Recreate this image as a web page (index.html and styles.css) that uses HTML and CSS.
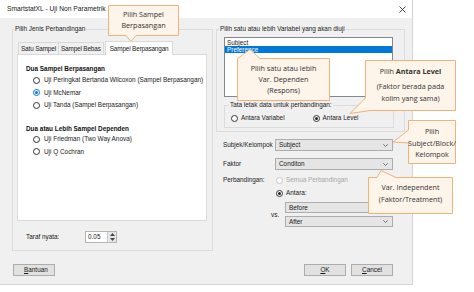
FILE: index.html
```html
<!DOCTYPE html>
<html>
<head>
  <title>SmartstatXL - Uji Non Parametrik</title>
<link rel="stylesheet" href="styles.css">
</head>
<body>
  <div class="dialog">
    <div class="titlebar">
      <span class="title">SmartstatXL - Uji Non Parametrik</span>
      <svg class="close" width="7" height="7" viewBox="0 0 7 7"><path d="M0.5 0.5 L6.5 6.5 M6.5 0.5 L0.5 6.5" stroke="#333" stroke-width="0.9"/></svg>
    </div>

    <div class="main">
      <fieldset class="grp grp-left">
        <legend>Pilih Jenis Perbandingan</legend>
        <div class="tabs">
          <span class="tab">Satu Sampel</span>
          <span class="tab tab-b">Sampel Bebas</span>
          <span class="tab tab-on">Sampel Berpasangan</span>
        </div>
        <div class="panel">
          <div class="heading">Dua Sampel Berpasangan</div>
          <div class="opt first"><span class="radio"></span>Uji Peringkat Bertanda Wilcoxon (Sampel Berpasangan)</div>
          <div class="opt"><span class="radio focus checked"></span>Uji McNemar</div>
          <div class="opt"><span class="radio"></span>Uji Tanda (Sampel Berpasangan)</div>
          <div class="heading heading-2">Dua atau Lebih Sampel Dependen</div>
          <div class="opt"><span class="radio"></span>Uji Friedman (Two Way Anova)</div>
          <div class="opt"><span class="radio"></span>Uji Q Cochran</div>
        </div>
        <div class="taraf">
          <span class="taraf-lbl">Taraf nyata:</span>
          <span class="spin">
            <span class="spin-val">0.05</span>
            <span class="spin-btns">
              <svg width="5" height="3" viewBox="0 0 5 3"><path d="M0 3 L2.5 0 L5 3 Z" fill="#444"/></svg>
              <svg width="5" height="3" viewBox="0 0 5 3"><path d="M0 0 L2.5 3 L5 0 Z" fill="#444"/></svg>
            </span>
          </span>
        </div>
      </fieldset>

      <div class="right">
        <fieldset class="grp grp-right">
          <legend>Pilih satu atau lebih Variabel yang akan diuji</legend>
          <div class="listbox">
            <div class="item">Subject</div>
            <div class="item selected">Preference</div>
          </div>
          <fieldset class="grp grp-inner">
            <legend>Tata letak data untuk perbandingan:</legend>
            <div class="layout-opts">
              <span class="opt-inline"><span class="radio"></span>Antara Variabel</span>
              <span class="opt-inline opt-level"><span class="radio checked"></span>Antara Level</span>
            </div>
          </fieldset>
        </fieldset>

        <div class="field-row row-subjek">
          <span class="field-lbl">Subjek/Kelompok</span>
          <span class="combo combo-wide">Subject
            <svg class="chev" width="5" height="3" viewBox="0 0 5 3"><path d="M0.3 0.3 L2.5 2.5 L4.7 0.3" fill="none" stroke="#555" stroke-width="0.8"/></svg>
          </span>
        </div>
        <div class="field-row row-faktor">
          <span class="field-lbl">Faktor</span>
          <span class="combo combo-wide">Conditon
            <svg class="chev" width="5" height="3" viewBox="0 0 5 3"><path d="M0.3 0.3 L2.5 2.5 L4.7 0.3" fill="none" stroke="#555" stroke-width="0.8"/></svg>
          </span>
        </div>
        <div class="field-row row-banding">
          <span class="field-lbl">Perbandingan:</span>
          <span class="opt-inline disabled"><span class="radio"></span>Semua Perbandingan</span>
        </div>
        <div class="field-row row-antara">
          <span class="field-lbl"></span>
          <span class="opt-inline"><span class="radio checked"></span>Antara:</span>
        </div>
        <div class="compare">
          <span class="vs">vs.</span>
          <span class="combo combo-sm">Before</span>
          <span class="combo combo-sm">After
            <svg class="chev" width="5" height="3" viewBox="0 0 5 3"><path d="M0.3 0.3 L2.5 2.5 L4.7 0.3" fill="none" stroke="#555" stroke-width="0.8"/></svg>
          </span>
        </div>
      </div>
    </div>

    <div class="footer">
      <span class="btn"><u>B</u>antuan</span>
      <span class="btn-group">
        <span class="btn"><u>O</u>K</span>
        <span class="btn"><u>C</u>ancel</span>
      </span>
    </div>
  </div>

  <!-- callouts laid over the dialog -->
  <div class="callouts">
    <svg class="callout-shapes" width="474" height="292" viewBox="0 0 474 292">
      <path d="M108.5,5.5 H178.5 V35.5 H136 L131,41.5 L126,35.5 H108.5 Z"/>
      <path d="M237.5,58.5 L250,49.5 L260,58.5 H329.5 V100.5 H237.5 Z"/>
      <path d="M365.5,60.5 H455.5 V110.5 H370 L350,113.5 L365.5,98 Z"/>
      <path d="M408.5,120.5 H455.5 V163.5 H408.5 V143 L393,142 L408.5,130 Z"/>
      <path d="M368.5,177.5 H377 L381,170.5 L396,177.5 H452.5 V213.5 H368.5 Z"/>
    </svg>
    <div class="callout-text ct-1">Pilih Sampel<br>Berpasangan</div>
    <div class="callout-text ct-2">Pilih satu atau lebih<br>Var. Dependen<br>(Respons)</div>
    <div class="callout-text ct-3">
      <div>Pilih <b>Antara Level</b></div>
      <div class="ct-3-sub">(Faktor berada pada<br>kolim yang sama)</div>
    </div>
    <div class="callout-text ct-4">Pilih<br>Subject/Block/<br>Kelompok</div>
    <div class="callout-text ct-5">Var. Independent<br>(Faktor/Treatment)</div>
  </div>
</body>
</html>
```

FILE: styles.css
```css
body {
  margin: 0;
  background-color: #fff;
  font-family: "Liberation Sans", Arial, sans-serif;
  font-size: 6.4px;
  line-height: 8px;
  color: #1a1a1a;
  position: relative;
  width: 474px;
  height: 292px;
  overflow: hidden;
}
.dialog {
  width: 413px;
  height: 285px;
  box-sizing: border-box;
  background-color: #f0f0f0;
  border-right: 1px solid #d4d4d4;
  border-bottom: 1px solid #d4d4d4;
}
.titlebar {
  height: 18px;
  background-color: #fff;
  display: flex;
  align-items: center;
  justify-content: space-between;
  padding: 0 7px;
}
.title {
  font-size: 6.7px;
  color: #222;
}
.close {
  margin-right: -1px;
}
.main {
  display: flex;
  gap: 3px;
  padding: 7px 0 0 12px;
  height: 233px;
  box-sizing: border-box;
}

/* group boxes */
.grp {
  margin: 0;
  border: 1px solid #dcdcdc;
  box-sizing: border-box;
}
.grp > legend {
  padding: 0 1px;
  line-height: 8px;
  color: #222;
}
.grp-left {
  width: 201px;
  height: 226px;
  padding: 7px 5px 0 4px;
}
.grp-left > legend {
  margin-left: -3px;
}
.tabs {
  display: flex;
  align-items: flex-end;
  height: 14px;
  padding-left: 1px;
}
.tab {
  height: 12px;
  box-sizing: border-box;
  border: 1px solid #d9d9d9;
  border-bottom: none;
  background-color: #f0f0f0;
  padding: 0 2px;
  line-height: 11px;
  white-space: nowrap;
  letter-spacing: -0.15px;
}
.tab-b { border-left: none; }
.tab-on {
  height: 14px;
  line-height: 13px;
  background-color: #fff;
  position: relative;
  top: 1px;
  z-index: 1;
  padding: 0 4px;
  margin-left: 1px;
}
.panel {
  background-color: #fff;
  border: 1px solid #d9d9d9;
  height: 167px;
  box-sizing: border-box;
  padding: 10px 0 0 8px;
}
.heading {
  font-weight: bold;
  height: 8px;
  color: #111;
}
.heading-2 {
  margin-top: 13.5px;
}
.opt {
  display: flex;
  align-items: center;
  height: 12.5px;
  padding-left: 7px;
  gap: 4px;
  color: #222;
}
.opt.first {
  margin-top: 1px;
}
.radio {
  width: 7px;
  height: 7px;
  box-sizing: border-box;
  border: 1px solid #333;
  border-radius: 50%;
  background-color: #fff;
  display: inline-flex;
  align-items: center;
  justify-content: center;
  flex: none;
}
.radio.checked::after {
  content: "";
  width: 3px;
  height: 3px;
  border-radius: 50%;
  background-color: #222;
}
.radio.focus {
  border-color: #0078d7;
}
.radio.focus::after {
  background-color: #0078d7;
}
.taraf {
  display: flex;
  align-items: center;
  margin-top: 10px;
  padding-left: 9px;
  height: 12px;
}
.taraf-lbl {
  width: 59px;
}
.spin {
  width: 32px;
  height: 12px;
  box-sizing: border-box;
  border: 1px solid #b5b5b5;
  background-color: #fff;
  display: flex;
  justify-content: space-between;
  align-items: center;
  padding-left: 2px;
}
.spin-btns {
  width: 8px;
  height: 10px;
  background-color: #e6e6e6;
  border-left: 1px solid #ccc;
  display: flex;
  flex-direction: column;
  justify-content: space-around;
  align-items: center;
}

/* right side */
.right {
  width: 189px;
  display: flex;
  flex-direction: column;
}
.grp-right {
  height: 107px;
  padding: 4px 0 0 7px;
}
.grp-right > legend {
  margin-left: -5px;
}
.listbox {
  width: 169px;
  height: 60px;
  box-sizing: border-box;
  border: 1px solid #828790;
  background-color: #fff;
  padding-top: 0.5px;
}
.item {
  height: 7px;
  line-height: 7px;
  padding-left: 2px;
}
.item.selected {
  background-color: #0078d7;
  color: #fff;
}
.grp-inner {
  width: 170px;
  height: 27px;
  margin-top: 4px;
  padding: 5px 0 0 6px;
}
.grp-inner > legend {
  margin-left: -2px;
}
.layout-opts {
  display: flex;
  height: 8px;
  align-items: center;
}
.opt-inline {
  display: inline-flex;
  align-items: center;
  gap: 3px;
  color: #222;
}
.opt-level {
  margin-left: 28px;
}
.opt-inline.disabled {
  color: #a8a8a8;
}
.opt-inline.disabled .radio {
  border-color: #c8c8c8;
}

.field-row {
  display: flex;
  align-items: center;
  padding-left: 7px;
  height: 12px;
}
.field-lbl {
  width: 52px;
  flex: none;
}
.row-subjek { margin-top: 7px; }
.row-faktor { margin-top: 7px; }
.row-banding { margin-top: 5px; height: 10px; }
.row-antara { margin-top: 3px; height: 10px; }
.row-banding .opt-inline,
.row-antara .opt-inline {
  margin-left: 1px;
}
.combo {
  height: 12px;
  box-sizing: border-box;
  border: 1px solid #adadad;
  background-color: #e5e5e5;
  display: flex;
  align-items: center;
  justify-content: space-between;
  padding: 0 4px 0 3px;
  color: #1a1a1a;
}
.combo-wide {
  width: 118px;
}
.compare {
  display: grid;
  grid-template-columns: 14px 108px;
  grid-template-rows: 11px 11px;
  row-gap: 3px;
  margin-top: 4px;
  padding-left: 55px;
}
.vs {
  grid-row: 1 / 3;
  align-self: center;
  position: relative;
  top: 0.5px;
}
.combo-sm {
  height: 11px;
  grid-column: 2;
}

.footer {
  display: flex;
  justify-content: space-between;
  margin-top: 13px;
  padding: 0 19px 0 13px;
}
.btn-group {
  display: flex;
  gap: 5px;
}
.btn {
  width: 42px;
  height: 12px;
  box-sizing: border-box;
  border: 1px solid #adadad;
  background-color: #e1e1e1;
  text-align: center;
  line-height: 10px;
}
.footer > .btn {
  text-align: left;
  padding-left: 10px;
}

/* callouts */
.callouts {
  position: absolute;
  left: 0;
  top: 0;
  width: 474px;
  height: 292px;
  pointer-events: none;
}
.callout-shapes {
  position: absolute;
  left: 0;
  top: 0;
}
.callout-shapes path {
  fill: #fdf4ea;
  stroke: #f0b27a;
  stroke-width: 1;
}
.callout-text {
  position: absolute;
  font-family: "Open Sans", "Noto Sans", sans-serif;
  font-size: 7.2px;
  line-height: 11px;
  text-align: center;
  color: #333;
}
.ct-1 { left: 108px; width: 71px; top: 8.5px; }
.ct-2 { left: 237px; width: 93px; top: 62.5px; }
.ct-3 { left: 365px; width: 91px; top: 65px; line-height: 12px; }
.ct-3-sub { margin-top: 3px; }
.ct-4 { left: 408px; width: 48px; top: 126px; line-height: 11.5px; }
.ct-5 { left: 368px; width: 85px; top: 180.5px; line-height: 12.5px; }
```
